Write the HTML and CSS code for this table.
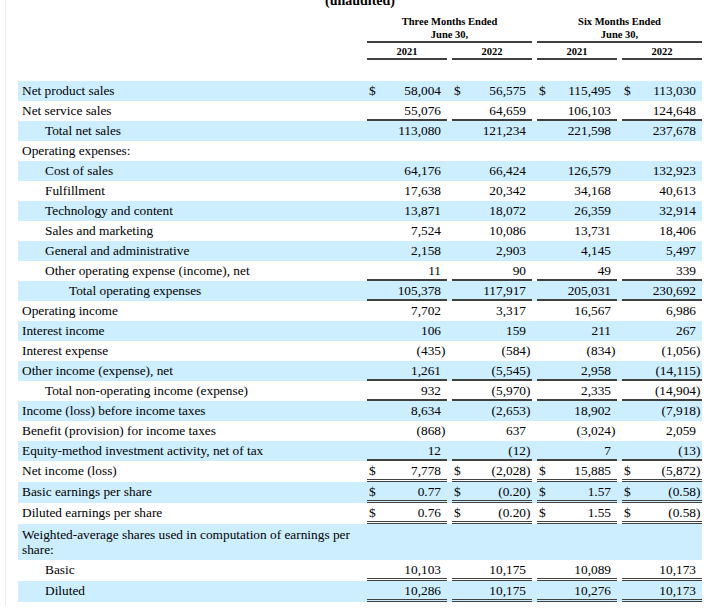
FILE: index.html
```html
<!DOCTYPE html>
<html>
<head>
<meta charset="utf-8">
<link rel="stylesheet" href="styles.css">
</head>
<body>
<div class="page">
  <div class="title">(unaudited)</div>
  <div class="hrow1">
    <div></div>
    <div class="grp">Three Months Ended<br>June 30,</div>
    <div class="grp">Six Months Ended<br>June 30,</div>
  </div>
  <div class="hrow2">
    <div></div>
    <div class="yr">2021</div>
    <div class="yr">2022</div>
    <div class="yr">2021</div>
    <div class="yr">2022</div>
  </div>

  <div class="tbl">
    <div class="row b">
      <div class="lbl">Net product sales</div>
      <div class="v"><span class="cur">$</span><span class="n">58,004</span><span class="p"></span></div>
      <div class="v"><span class="cur">$</span><span class="n">56,575</span><span class="p"></span></div>
      <div class="v"><span class="cur">$</span><span class="n">115,495</span><span class="p"></span></div>
      <div class="v"><span class="cur">$</span><span class="n">113,030</span><span class="p"></span></div>
    </div>
    <div class="row">
      <div class="lbl">Net service sales</div>
      <div class="v u"><span class="n">55,076</span><span class="p"></span></div>
      <div class="v u"><span class="n">64,659</span><span class="p"></span></div>
      <div class="v u"><span class="n">106,103</span><span class="p"></span></div>
      <div class="v u"><span class="n">124,648</span><span class="p"></span></div>
    </div>
    <div class="row b">
      <div class="lbl i1">Total net sales</div>
      <div class="v"><span class="n">113,080</span><span class="p"></span></div>
      <div class="v"><span class="n">121,234</span><span class="p"></span></div>
      <div class="v"><span class="n">221,598</span><span class="p"></span></div>
      <div class="v"><span class="n">237,678</span><span class="p"></span></div>
    </div>
    <div class="row">
      <div class="lbl">Operating expenses:</div>
      <div class="v"></div><div class="v"></div><div class="v"></div><div class="v"></div>
    </div>
    <div class="row b">
      <div class="lbl i1">Cost of sales</div>
      <div class="v"><span class="n">64,176</span><span class="p"></span></div>
      <div class="v"><span class="n">66,424</span><span class="p"></span></div>
      <div class="v"><span class="n">126,579</span><span class="p"></span></div>
      <div class="v"><span class="n">132,923</span><span class="p"></span></div>
    </div>
    <div class="row">
      <div class="lbl i1">Fulfillment</div>
      <div class="v"><span class="n">17,638</span><span class="p"></span></div>
      <div class="v"><span class="n">20,342</span><span class="p"></span></div>
      <div class="v"><span class="n">34,168</span><span class="p"></span></div>
      <div class="v"><span class="n">40,613</span><span class="p"></span></div>
    </div>
    <div class="row b">
      <div class="lbl i1">Technology and content</div>
      <div class="v"><span class="n">13,871</span><span class="p"></span></div>
      <div class="v"><span class="n">18,072</span><span class="p"></span></div>
      <div class="v"><span class="n">26,359</span><span class="p"></span></div>
      <div class="v"><span class="n">32,914</span><span class="p"></span></div>
    </div>
    <div class="row">
      <div class="lbl i1">Sales and marketing</div>
      <div class="v"><span class="n">7,524</span><span class="p"></span></div>
      <div class="v"><span class="n">10,086</span><span class="p"></span></div>
      <div class="v"><span class="n">13,731</span><span class="p"></span></div>
      <div class="v"><span class="n">18,406</span><span class="p"></span></div>
    </div>
    <div class="row b">
      <div class="lbl i1">General and administrative</div>
      <div class="v"><span class="n">2,158</span><span class="p"></span></div>
      <div class="v"><span class="n">2,903</span><span class="p"></span></div>
      <div class="v"><span class="n">4,145</span><span class="p"></span></div>
      <div class="v"><span class="n">5,497</span><span class="p"></span></div>
    </div>
    <div class="row">
      <div class="lbl i1">Other operating expense (income), net</div>
      <div class="v u"><span class="n">11</span><span class="p"></span></div>
      <div class="v u"><span class="n">90</span><span class="p"></span></div>
      <div class="v u"><span class="n">49</span><span class="p"></span></div>
      <div class="v u"><span class="n">339</span><span class="p"></span></div>
    </div>
    <div class="row b">
      <div class="lbl i2">Total operating expenses</div>
      <div class="v u"><span class="n">105,378</span><span class="p"></span></div>
      <div class="v u"><span class="n">117,917</span><span class="p"></span></div>
      <div class="v u"><span class="n">205,031</span><span class="p"></span></div>
      <div class="v u"><span class="n">230,692</span><span class="p"></span></div>
    </div>
    <div class="row">
      <div class="lbl">Operating income</div>
      <div class="v"><span class="n">7,702</span><span class="p"></span></div>
      <div class="v"><span class="n">3,317</span><span class="p"></span></div>
      <div class="v"><span class="n">16,567</span><span class="p"></span></div>
      <div class="v"><span class="n">6,986</span><span class="p"></span></div>
    </div>
    <div class="row b">
      <div class="lbl">Interest income</div>
      <div class="v"><span class="n">106</span><span class="p"></span></div>
      <div class="v"><span class="n">159</span><span class="p"></span></div>
      <div class="v"><span class="n">211</span><span class="p"></span></div>
      <div class="v"><span class="n">267</span><span class="p"></span></div>
    </div>
    <div class="row">
      <div class="lbl">Interest expense</div>
      <div class="v"><span class="n">(435</span><span class="p">)</span></div>
      <div class="v"><span class="n">(584</span><span class="p">)</span></div>
      <div class="v"><span class="n">(834</span><span class="p">)</span></div>
      <div class="v"><span class="n">(1,056</span><span class="p">)</span></div>
    </div>
    <div class="row b">
      <div class="lbl">Other income (expense), net</div>
      <div class="v u"><span class="n">1,261</span><span class="p"></span></div>
      <div class="v u"><span class="n">(5,545</span><span class="p">)</span></div>
      <div class="v u"><span class="n">2,958</span><span class="p"></span></div>
      <div class="v u"><span class="n">(14,115</span><span class="p">)</span></div>
    </div>
    <div class="row">
      <div class="lbl i1">Total non-operating income (expense)</div>
      <div class="v u"><span class="n">932</span><span class="p"></span></div>
      <div class="v u"><span class="n">(5,970</span><span class="p">)</span></div>
      <div class="v u"><span class="n">2,335</span><span class="p"></span></div>
      <div class="v u"><span class="n">(14,904</span><span class="p">)</span></div>
    </div>
    <div class="row b">
      <div class="lbl">Income (loss) before income taxes</div>
      <div class="v"><span class="n">8,634</span><span class="p"></span></div>
      <div class="v"><span class="n">(2,653</span><span class="p">)</span></div>
      <div class="v"><span class="n">18,902</span><span class="p"></span></div>
      <div class="v"><span class="n">(7,918</span><span class="p">)</span></div>
    </div>
    <div class="row">
      <div class="lbl">Benefit (provision) for income taxes</div>
      <div class="v"><span class="n">(868</span><span class="p">)</span></div>
      <div class="v"><span class="n">637</span><span class="p"></span></div>
      <div class="v"><span class="n">(3,024</span><span class="p">)</span></div>
      <div class="v"><span class="n">2,059</span><span class="p"></span></div>
    </div>
    <div class="row b">
      <div class="lbl">Equity-method investment activity, net of tax</div>
      <div class="v u"><span class="n">12</span><span class="p"></span></div>
      <div class="v u"><span class="n">(12</span><span class="p">)</span></div>
      <div class="v u"><span class="n">7</span><span class="p"></span></div>
      <div class="v u"><span class="n">(13</span><span class="p">)</span></div>
    </div>
    <div class="row">
      <div class="lbl">Net income (loss)</div>
      <div class="v uu"><span class="cur">$</span><span class="n">7,778</span><span class="p"></span></div>
      <div class="v uu"><span class="cur">$</span><span class="n">(2,028</span><span class="p">)</span></div>
      <div class="v uu"><span class="cur">$</span><span class="n">15,885</span><span class="p"></span></div>
      <div class="v uu"><span class="cur">$</span><span class="n">(5,872</span><span class="p">)</span></div>
    </div>
    <div class="row b">
      <div class="lbl">Basic earnings per share</div>
      <div class="v uu"><span class="cur">$</span><span class="n">0.77</span><span class="p"></span></div>
      <div class="v uu"><span class="cur">$</span><span class="n">(0.20</span><span class="p">)</span></div>
      <div class="v uu"><span class="cur">$</span><span class="n">1.57</span><span class="p"></span></div>
      <div class="v uu"><span class="cur">$</span><span class="n">(0.58</span><span class="p">)</span></div>
    </div>
    <div class="row">
      <div class="lbl">Diluted earnings per share</div>
      <div class="v uu"><span class="cur">$</span><span class="n">0.76</span><span class="p"></span></div>
      <div class="v uu"><span class="cur">$</span><span class="n">(0.20</span><span class="p">)</span></div>
      <div class="v uu"><span class="cur">$</span><span class="n">1.55</span><span class="p"></span></div>
      <div class="v uu"><span class="cur">$</span><span class="n">(0.58</span><span class="p">)</span></div>
    </div>
    <div class="row b">
      <div class="lbl wrap">Weighted-average shares used in computation of earnings per share:</div>
      <div class="v"></div><div class="v"></div><div class="v"></div><div class="v"></div>
    </div>
    <div class="row">
      <div class="lbl i1">Basic</div>
      <div class="v uu"><span class="n">10,103</span><span class="p"></span></div>
      <div class="v uu"><span class="n">10,175</span><span class="p"></span></div>
      <div class="v uu"><span class="n">10,089</span><span class="p"></span></div>
      <div class="v uu"><span class="n">10,173</span><span class="p"></span></div>
    </div>
    <div class="row b">
      <div class="lbl i1">Diluted</div>
      <div class="v uu"><span class="n">10,286</span><span class="p"></span></div>
      <div class="v uu"><span class="n">10,175</span><span class="p"></span></div>
      <div class="v uu"><span class="n">10,276</span><span class="p"></span></div>
      <div class="v uu"><span class="n">10,173</span><span class="p"></span></div>
    </div>
  </div>
</div>
</body>
</html>
```

FILE: styles.css
```css
html, body {
  margin: 0;
  padding: 0;
  background: #ffffff;
}

body {
  font-family: "Liberation Serif", "Times New Roman", serif;
  color: #000000;
  font-size: 13.33px;
  overflow: hidden;
}

.page {
  margin-left: 5px;
  border-left: 1px solid #ececec;
  padding-left: 12px;
  min-height: 613px;
  width: 684px;
}

.title {
  margin-top: -7px;
  height: 16px;
  line-height: 16px;
  font-size: 14px;
  font-weight: bold;
  text-align: center;
  margin-bottom: 6px;
}

.hrow1,
.hrow2 {
  display: grid;
  column-gap: 5px;
  font-size: 10.5px;
  font-weight: bold;
  line-height: 13px;
  text-align: center;
}

.hrow1 {
  grid-template-columns: 344px 165px 165px;
}

.hrow2 {
  grid-template-columns: 344px repeat(4, 80px);
}

.grp {
  border-bottom: 2px solid #404040;
  padding-bottom: 0;
}

.yr {
  padding-top: 2px;
  border-bottom: 2px solid #404040;
}

.hrow2 > div:first-child,
.hrow1 > div:first-child {
  border: none;
}

.tbl {
  margin-top: 21px;
}

.row {
  display: grid;
  grid-template-columns: 344px repeat(4, 80px);
  column-gap: 5px;
  line-height: 15px;
}

.row.b {
  background: #cceeff;
}

.lbl {
  padding: 2px 6px 3px 4px;
}

.lbl.i1 {
  padding-left: 27px;
}

.lbl.i2 {
  padding-left: 51px;
}

.lbl.wrap {
  padding-top: 3px;
}

.v {
  display: flex;
  align-items: baseline;
  padding: 2px 0 3px;
}

.v.u {
  padding-bottom: 1px;
  border-bottom: 2px solid #404040;
}

.v.uu {
  padding-bottom: 1px;
  border-bottom: 3px double #404040;
  align-self: end;
}

.cur {
  padding-left: 2px;
}

.n {
  margin-left: auto;
}

.p {
  width: 6px;
  flex: none;
}
```
